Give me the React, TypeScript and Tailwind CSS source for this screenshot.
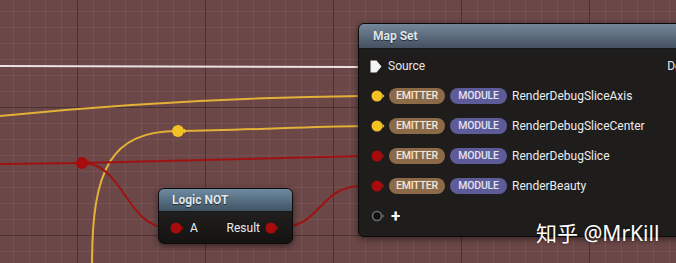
import React from 'react';

const font = 'font-["Roboto","Liberation_Sans",sans-serif]';

type Row = { label: string; color: 'yellow' | 'red' };

const rows: Row[] = [
  { label: 'RenderDebugSliceAxis', color: 'yellow' },
  { label: 'RenderDebugSliceCenter', color: 'yellow' },
  { label: 'RenderDebugSlice', color: 'red' },
  { label: 'RenderBeauty', color: 'red' },
];

const Pin = ({ color }: { color: 'yellow' | 'red' }) => (
  <svg width="14" height="12" viewBox="0 0 14 12" className="shrink-0">
    <circle cx="6" cy="6" r="5.5" fill={color === 'yellow' ? '#f2c224' : '#a80b0b'} />
    <path d="M11.5 3.8 L13.5 6 L11.5 8.2 Z" fill={color === 'yellow' ? '#f2c224' : '#a80b0b'} />
  </svg>
);

const Wires = () => (
  <svg className="absolute inset-0" width="676" height="263" viewBox="0 0 676 263" fill="none">
    {/* exec / source */}
    <path d="M0 66 L360 67" stroke="#ece2e2" strokeWidth="2" />
    {/* yellow wires */}
    <path d="M0 116 Q180 98 362 96" stroke="#e3b038" strokeWidth="2" />
    <path d="M178 131 C250 130 300 127 362 126" stroke="#e3b038" strokeWidth="2" />
    <path d="M178 131 C110 131 92 170 92 265" stroke="#e3b038" strokeWidth="2" />
    {/* red wires */}
    <path d="M0 164 L82 163" stroke="#a01212" strokeWidth="2" />
    <path d="M82 163 L362 156" stroke="#a01212" strokeWidth="2" />
    <path d="M82 163 C125 163 125 228 170 228" stroke="#a01212" strokeWidth="2" />
    <path d="M278 228 C322 228 318 186 362 186" stroke="#a01212" strokeWidth="2" />
    {/* reroute knots */}
    <circle cx="178" cy="131" r="6" fill="#f2c224" />
    <path d="M184 128.5 L186.5 131 L184 133.5 Z" fill="#f2c224" />
    <circle cx="82" cy="163" r="6" fill="#a80b0b" />
    <path d="M88 160.5 L90.5 163 L88 165.5 Z" fill="#a80b0b" />
  </svg>
);

const MapSetNode = () => (
  <div className="absolute left-[358px] top-[23px] w-[360px] h-[214px] rounded-[6px] border border-[#0c0b0b] bg-[#1f1d1c] shadow-[0_2px_6px_rgba(0,0,0,0.5)] overflow-hidden">
    <div className="h-[25px] flex items-center pl-[14px] bg-[linear-gradient(to_bottom,#74879a,#445160)] border-b border-[#15191d]">
      <span className="text-[12px] font-bold text-[#dfe4e9] [text-shadow:0_1px_1px_rgba(0,0,0,0.6)]">Map Set</span>
    </div>
    <div className="pt-[2px]">
      <div className="h-[30px] flex items-center pl-[11px]">
        <svg width="12" height="13" viewBox="0 0 12 13" className="shrink-0">
          <path d="M0.5 0.5 H6.5 L11.5 6.5 L6.5 12.5 H0.5 Z" fill="#f4f4f4" />
        </svg>
        <span className="ml-[6px] text-[12px] text-[#e6e6e6]">Source</span>
        <span className="ml-[242px] text-[12px] text-[#e6e6e6]">Destination</span>
      </div>
      {rows.map((r) => (
        <div key={r.label} className="h-[30px] flex items-center pl-[12px]">
          <Pin color={r.color} />
          <span className="ml-[4px] w-[56px] h-[16px] rounded-full bg-[#8c6a48] flex items-center justify-center text-[10.5px] font-medium text-[#f3e6d8] tracking-[-0.2px]">
            EMITTER
          </span>
          <span className="ml-[5px] w-[57px] h-[16px] rounded-full bg-[#5e5c98] flex items-center justify-center text-[10.5px] font-medium text-[#e2e2f4] tracking-[-0.2px]">
            MODULE
          </span>
          <span className="ml-[5px] text-[12px] text-[#ececec]">{r.label}</span>
        </div>
      ))}
      <div className="h-[30px] flex items-center pl-[12px]">
        <svg width="14" height="12" viewBox="0 0 14 12" className="shrink-0">
          <circle cx="6" cy="6" r="4.5" fill="#111" stroke="#6a6a6a" strokeWidth="1.6" />
          <path d="M11.5 4 L13.3 6 L11.5 8 Z" fill="#6a6a6a" />
        </svg>
        <span className="ml-[6px] text-[17px] leading-none font-bold text-white">+</span>
      </div>
    </div>
  </div>
);

const LogicNotNode = () => (
  <div className="absolute left-[158px] top-[188px] w-[135px] h-[56px] rounded-[6px] border border-[#0c0b0b] bg-[linear-gradient(to_bottom,#2a2827,#141312)] shadow-[0_2px_6px_rgba(0,0,0,0.5)] overflow-hidden">
    <div className="h-[23px] flex items-center pl-[13px] bg-[linear-gradient(to_bottom,#6f8aa0,#3f5364)] border-b border-[#15191d]">
      <span className="text-[12px] font-bold text-[#dfe6ec] [text-shadow:0_1px_1px_rgba(0,0,0,0.6)]">Logic NOT</span>
    </div>
    <div className="h-[31px] flex items-center justify-between pl-[11px] pr-[13px]">
      <div className="flex items-center">
        <Pin color="red" />
        <span className="ml-[6px] text-[12px] text-[#ececec]">A</span>
      </div>
      <div className="flex items-center">
        <span className="mr-[5px] text-[12px] text-[#ececec]">Result</span>
        <Pin color="red" />
      </div>
    </div>
  </div>
);

export default function App() {
  return (
    <div
      className={`relative w-[676px] h-[263px] overflow-hidden ${font} bg-[#6b4747] bg-[linear-gradient(to_right,#4a3232_1px,transparent_1px),linear-gradient(to_bottom,#4a3232_1px,transparent_1px),linear-gradient(to_right,#775151_1px,transparent_1px),linear-gradient(to_bottom,#775151_1px,transparent_1px)] bg-[size:128px_128px,128px_128px,16px_16px,16px_16px] bg-[position:77px_107px,77px_107px,13px_11px,13px_11px]`}
    >
      <Wires />
      <LogicNotNode />
      <MapSetNode />
      <div className='absolute left-[536px] top-[219px] text-[21px] leading-[29px] text-white font-["Noto_Sans","Noto_Sans_CJK_SC",sans-serif] [text-shadow:0_0_3px_rgba(0,0,0,0.5)]'>
        知乎 @MrKill
      </div>
    </div>
  );
}
